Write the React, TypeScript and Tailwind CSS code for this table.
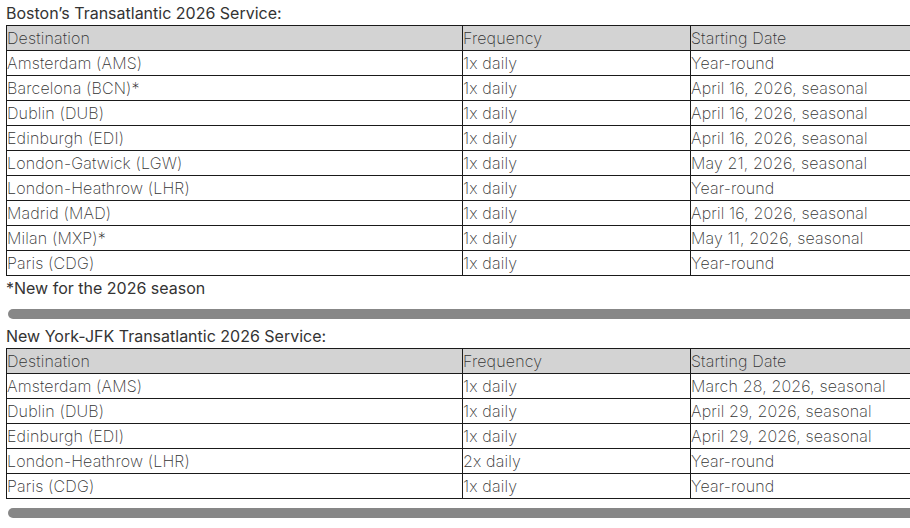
import type { ReactNode } from "react";

type Row = [string, string, string];

const BOSTON: Row[] = [
	["Amsterdam (AMS)", "1x daily", "Year-round"],
	["Barcelona (BCN)*", "1x daily", "April 16, 2026, seasonal"],
	["Dublin (DUB)", "1x daily", "April 16, 2026, seasonal"],
	["Edinburgh (EDI)", "1x daily", "April 16, 2026, seasonal"],
	["London-Gatwick (LGW)", "1x daily", "May 21, 2026, seasonal"],
	["London-Heathrow (LHR)", "1x daily", "Year-round"],
	["Madrid (MAD)", "1x daily", "April 16, 2026, seasonal"],
	["Milan (MXP)*", "1x daily", "May 11, 2026, seasonal"],
	["Paris (CDG)", "1x daily", "Year-round"],
];

const JFK: Row[] = [
	["Amsterdam (AMS)", "1x daily", "March 28, 2026, seasonal"],
	["Dublin (DUB)", "1x daily", "April 29, 2026, seasonal"],
	["Edinburgh (EDI)", "1x daily", "April 29, 2026, seasonal"],
	["London-Heathrow (LHR)", "2x daily", "Year-round"],
	["Paris (CDG)", "1x daily", "Year-round"],
];

function RouteTable({ rows }: { rows: Row[] }): ReactNode {
	return (
		<div className="overflow-hidden">
			<table className="w-[960px] border-collapse table-fixed text-[16px] leading-[24px] font-extralight tracking-[0.15px] text-[#333]">
				<colgroup>
					<col className="w-[456px]" />
					<col className="w-[228px]" />
					<col />
				</colgroup>
				<thead>
					<tr className="bg-[#d3d3d3]">
						<th className="border border-[#1a1a1a] p-0 text-left font-extralight">Destination</th>
						<th className="border border-[#1a1a1a] p-0 text-left font-extralight">Frequency</th>
						<th className="border border-[#1a1a1a] p-0 text-left font-extralight">Starting Date</th>
					</tr>
				</thead>
				<tbody>
					{rows.map((r, i) => (
						<tr key={i}>
							<td className="border border-[#1a1a1a] p-0">{r[0]}</td>
							<td className="border border-[#1a1a1a] p-0">{r[1]}</td>
							<td className="border border-[#1a1a1a] p-0">{r[2]}</td>
						</tr>
					))}
				</tbody>
			</table>
		</div>
	);
}

function ScrollThumb(): ReactNode {
	return (
		<div className="pl-[2px] -mr-[6px]">
			<div className="h-[10px] rounded-l-full bg-[#878787]" />
		</div>
	);
}

export default function App(): ReactNode {
	return (
		<div className="w-[910px] h-[528px] overflow-hidden bg-white pl-[6px] font-['Inter',sans-serif]">
			<p className="text-[16px] leading-[24px] text-[#333] pt-px">
				Boston’s Transatlantic 2026 Service:
			</p>
			<RouteTable rows={BOSTON} />
			<p className="text-[16px] leading-[24px] text-[#333]">*New for the 2026 season</p>
			<div className="mt-[9px]">
				<ScrollThumb />
			</div>
			<p className="text-[16px] leading-[24px] text-[#333] mt-[5px]">
				New York-JFK Transatlantic 2026 Service:
			</p>
			<RouteTable rows={JFK} />
			<div className="mt-[9px]">
				<ScrollThumb />
			</div>
		</div>
	);
}
